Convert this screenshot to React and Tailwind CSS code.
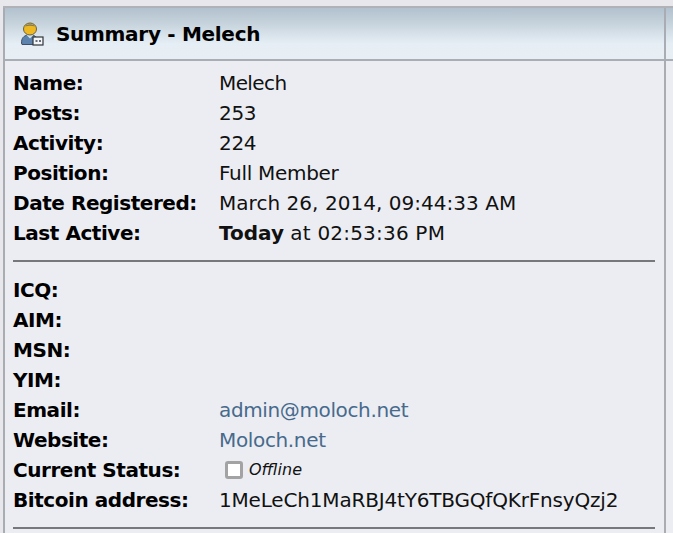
function Row({ label, children }) {
  return (
    <div className="flex h-[30px] items-center">
      <div className="w-[206px] shrink-0 font-bold tracking-[-0.45px] text-black">{label}</div>
      <div className="min-w-0 flex-1 whitespace-nowrap text-[#111]">{children}</div>
    </div>
  );
}

function HeaderBar({ children }) {
  return (
    <div className="flex h-[53px] items-center border-b-2 border-[#a9aeb6] bg-[linear-gradient(#b2c1ce_0%,#c6d3dc_30%,#e6eef5_70%,#e8eff4_100%)]">
      {children}
    </div>
  );
}

export default function App() {
  return (
    <div className="h-[533px] w-[673px] overflow-hidden bg-[#e8e7eb] pt-[6px] pl-[3px] font-['DejaVu_Sans',sans-serif] text-[20px] leading-[30px]">
      <div className="flex h-[527px] border-t-2 border-[#b0b2b8]">
        <div className="w-[663px] shrink-0 border-r-2 border-l-2 border-[#a9acb3] bg-[#ebedf3]">
          <HeaderBar>
            <svg width="24" height="24" viewBox="0 0 24 24" className="ml-[15px] mr-[12px] shrink-0">
              <path d="M1.500 21c0-5 2-7 6-8h5c3 1 4 2 4 4v5.500H2z" fill="#5b83ad" stroke="#3d4f66" strokeWidth="1" />
              <path d="M6.500 13l3.500 3.500 3.500-3.500" fill="#cfe0ef" />
              <ellipse cx="10" cy="7" rx="6.500" ry="6" fill="#eeb822" stroke="#6b6238" strokeWidth="1" />
              <path d="M5 4.500c2-3 8-3 10 0-3-1-7-1-10 0z" fill="#7a7a6a" />
              <rect x="13" y="15" width="10" height="8" fill="#f3f5f6" stroke="#30353c" strokeWidth="1.200" />
              <path d="M15.500 19h2M19 19h2" stroke="#66707a" strokeWidth="2" />
            </svg>
            <h1 className="text-[20px] font-bold tracking-[-0.3px] text-black">Summary - Melech</h1>
          </HeaderBar>
          <div className="px-[8px] pt-[7px]">
            <Row label="Name:"><span className="tracking-[-0.6px]">Melech</span></Row>
            <Row label="Posts:"><span className="tracking-[-0.3px]">253</span></Row>
            <Row label="Activity:"><span className="tracking-[-0.3px]">224</span></Row>
            <Row label="Position:"><span className="tracking-[-0.3px]">Full Member</span></Row>
            <Row label="Date Registered:"><span className="tracking-[0.04px]">March 26, 2014, 09:44:33 AM</span></Row>
            <Row label="Last Active:"><strong>Today</strong> <span className="tracking-[0.2px]">at 02:53:36 PM</span></Row>
            <div className="mt-[12px] mb-[13px] mr-[1px] border-t-2 border-[#77787c]" />
            <Row label="ICQ:" />
            <Row label="AIM:" />
            <Row label="MSN:" />
            <Row label="YIM:" />
            <Row label="Email:"><span className="tracking-[-0.37px] text-[#476a8c]">admin@moloch.net</span></Row>
            <Row label="Website:"><span className="tracking-[-0.35px] text-[#476a8c]">Moloch.net</span></Row>
            <Row label="Current Status:">
              <span className="flex items-center pl-[6px] text-[16px] italic">
                <span className="mr-[6px] h-[18px] w-[18px] rounded-[3px] border-[3px] border-[#a3a3a3] bg-white" />
                Offline
              </span>
            </Row>
            <Row label="Bitcoin address:"><span className="tracking-[-0.18px]">1MeLeCh1MaRBJ4tY6TBGQfQKrFnsyQzj2</span></Row>
            <div className="mt-[12px] mr-[1px] border-t-2 border-[#77787c]" />
          </div>
        </div>
        <div className="flex-1 bg-[#ebedf3]">
          <HeaderBar />
        </div>
      </div>
    </div>
  );
}
